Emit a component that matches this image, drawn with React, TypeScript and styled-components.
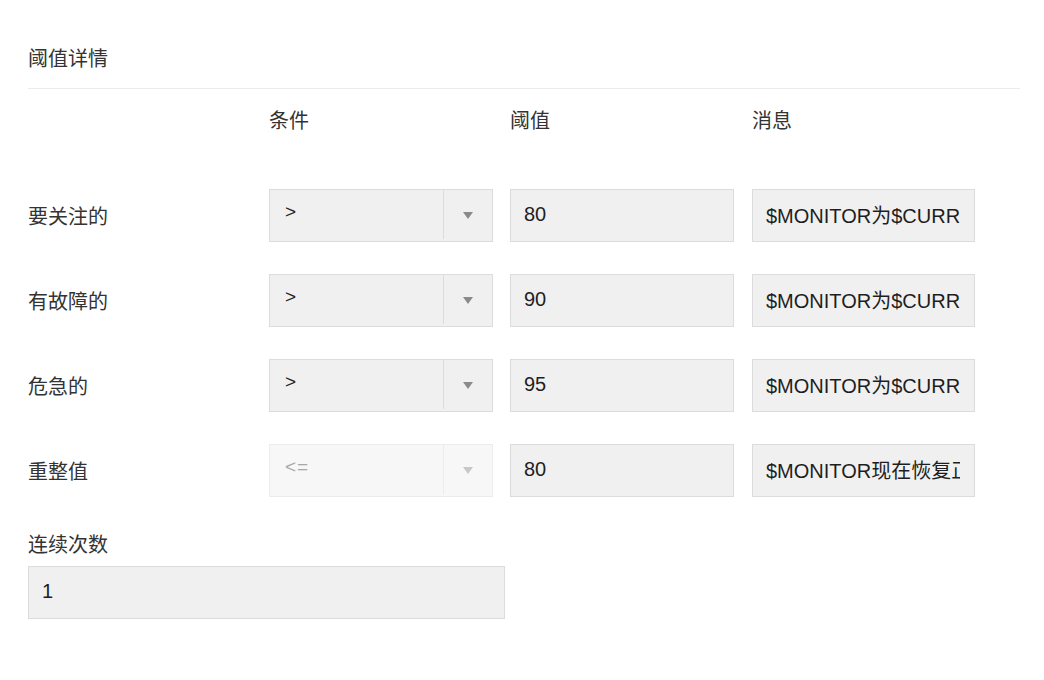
import { Fragment } from 'react';
import { createGlobalStyle, styled } from 'styled-components';

const GlobalStyle = createGlobalStyle`
  body {
    margin: 0;
    background: #fff;
    font-family: "Liberation Sans", "Noto Sans CJK SC", sans-serif;
    color: #333;
  }
`;

const Page = styled.div`
  padding: 44px 24px 0 28px;
  width: 992px;
`;

const Title = styled.h2`
  margin: 0;
  font-family: "Noto Sans CJK SC", sans-serif;
  font-size: 20px;
  font-weight: 400;
  line-height: 28px;
  color: #333;
  padding-bottom: 16px;
  border-bottom: 1px solid #ececec;
`;

const Grid = styled.div`
  display: grid;
  grid-template-columns: 224px 224px 225px 223px;
  column-gap: 17px;
  row-gap: 32px;
  align-items: center;
`;

const HeaderRow = styled(Grid)`
  padding-top: 17px;
  margin-bottom: 55px;
`;

const Label = styled.div`
  font-family: "Noto Sans CJK SC", sans-serif;
  font-size: 20px;
  line-height: 28px;
  color: #333;
`;

const TextInput = styled.input`
  box-sizing: border-box;
  width: 100%;
  max-width: 477px;
  height: 53px;
  margin: 0;
  padding: 0 14px 2px 13px;
  border: 1px solid #dcdcdc;
  border-radius: 0;
  background: #f0f0f0;
  font-family: "Liberation Sans", "Noto Sans CJK SC", sans-serif;
  font-size: 20px;
  color: #1e1e1e;
  outline: none;
`;

const ThresholdInput = styled(TextInput)`
  width: 224px;
`;

const Select = styled.div<{ $disabled?: boolean }>`
  box-sizing: border-box;
  height: 53px;
  display: flex;
  border: 1px solid ${(p) => (p.$disabled ? '#ececec' : '#dcdcdc')};
  background: ${(p) => (p.$disabled ? '#f7f7f7' : '#f0f0f0')};
  color: ${(p) => (p.$disabled ? '#a8a8a8' : '#222')};
`;

const SelectValue = styled.span`
  flex: 1;
  padding: 11px 0 0 15px;
  font-family: "Liberation Sans", sans-serif;
  font-size: 19px;
  line-height: 22px;
  letter-spacing: 1px;
`;

const SelectArrow = styled.span<{ $disabled?: boolean }>`
  width: 48px;
  margin: 0 0 2px;
  border-left: 1px solid ${(p) => (p.$disabled ? '#ececec' : '#dcdcdc')};
  display: flex;
  align-items: center;
  justify-content: center;
  &::after {
    content: '';
    border-left: 5px solid transparent;
    border-right: 5px solid transparent;
    border-top: 7px solid ${(p) => (p.$disabled ? '#c8c8c8' : '#8a8a8a')};
    margin-top: 2px;
  }
`;

const Footer = styled.div`
  margin-top: 33px;
  display: flex;
  flex-direction: column;
  gap: 8px;
  width: 477px;
`;

const rows = [
  { label: '要关注的', op: '>', value: '80', message: '$MONITOR为$CURRENT_VALUE' },
  { label: '有故障的', op: '>', value: '90', message: '$MONITOR为$CURRENT_VALUE' },
  { label: '危急的', op: '>', value: '95', message: '$MONITOR为$CURRENT_VALUE' },
  { label: '重整值', op: '<=', value: '80', message: '$MONITOR现在恢复正常', disabled: true },
];

export default function App() {
  return (
    <>
      <GlobalStyle />
      <Page>
        <Title>阈值详情</Title>
        <HeaderRow>
          <span />
          <Label>条件</Label>
          <Label>阈值</Label>
          <Label>消息</Label>
        </HeaderRow>
        <Grid>
          {rows.map((row) => (
            <Fragment key={row.label}>
              <Label>{row.label}</Label>
              <Select $disabled={row.disabled}>
                <SelectValue>{row.op}</SelectValue>
                <SelectArrow $disabled={row.disabled} />
              </Select>
              <ThresholdInput defaultValue={row.value} />
              <TextInput defaultValue={row.message} />
            </Fragment>
          ))}
        </Grid>
        <Footer>
          <Label>连续次数</Label>
          <TextInput defaultValue="1" />
        </Footer>
      </Page>
    </>
  );
}
